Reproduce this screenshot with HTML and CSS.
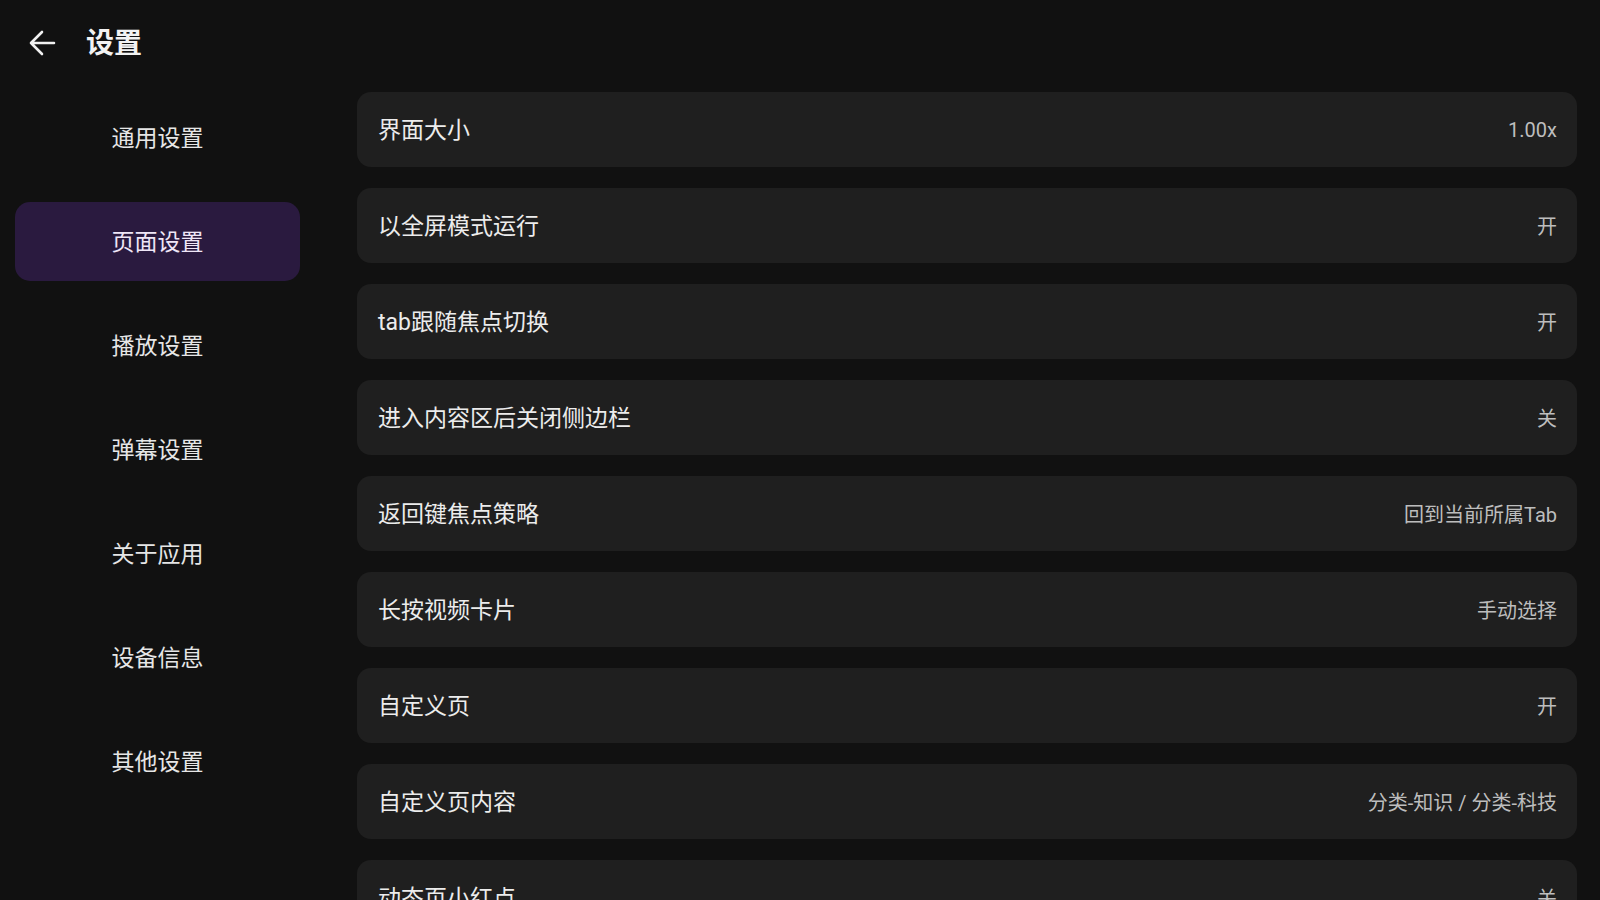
FILE: index.html
```html
<!DOCTYPE html>
<html lang="zh">
<head>
<meta charset="utf-8">
<title>设置</title>
<link rel="stylesheet" href="styles.css">
</head>
<body>
<header class="header">
  <svg class="back" viewBox="0 0 28 28" width="28" height="28">
    <path d="M26 14H3M14 3L3 14L14 25" fill="none" stroke="#f0f0f0" stroke-width="2.6" stroke-linecap="round" stroke-linejoin="round"/>
  </svg>
  <h1 class="title">设置</h1>
</header>
<div class="main">
  <nav class="sidebar">
    <div class="nav-item">通用设置</div>
    <div class="nav-item active">页面设置</div>
    <div class="nav-item">播放设置</div>
    <div class="nav-item">弹幕设置</div>
    <div class="nav-item">关于应用</div>
    <div class="nav-item">设备信息</div>
    <div class="nav-item">其他设置</div>
  </nav>
  <section class="content">
    <div class="row"><span class="label">界面大小</span><span class="value">1.00x</span></div>
    <div class="row"><span class="label">以全屏模式运行</span><span class="value">开</span></div>
    <div class="row"><span class="label">tab跟随焦点切换</span><span class="value">开</span></div>
    <div class="row"><span class="label">进入内容区后关闭侧边栏</span><span class="value">关</span></div>
    <div class="row"><span class="label">返回键焦点策略</span><span class="value">回到当前所属Tab</span></div>
    <div class="row"><span class="label">长按视频卡片</span><span class="value">手动选择</span></div>
    <div class="row"><span class="label">自定义页</span><span class="value">开</span></div>
    <div class="row"><span class="label">自定义页内容</span><span class="value">分类-知识 / 分类-科技</span></div>
    <div class="row"><span class="label">动态页小红点</span><span class="value">关</span></div>
  </section>
</div>
</body>
</html>
```

FILE: styles.css
```css
* { box-sizing: border-box; }
html, body {
  margin: 0;
  padding: 0;
  width: 1600px;
  height: 900px;
  overflow: hidden;
  background: #111111;
  color: #ececec;
  font-family: Roboto, "Noto Sans CJK SC", sans-serif;
}
.header {
  height: 86px;
  display: flex;
  align-items: center;
  padding-left: 28px;
}
.back { display: block; }
.title {
  margin: 0 0 0 30px;
  font-size: 28px;
  font-weight: 700;
  color: #f2f2f2;
  line-height: 1;
  padding-top: 1px;
}
.main {
  display: flex;
  align-items: flex-start;
}
.sidebar {
  width: 285px;
  margin-left: 15px;
  padding-top: 12px;
  display: flex;
  flex-direction: column;
  gap: 25px;
}
.nav-item {
  height: 79px;
  border-radius: 15px;
  display: flex;
  align-items: center;
  justify-content: center;
  font-size: 23px;
  color: #e6e6e6;
  padding-bottom: 4px;
}
.nav-item.active {
  background: #2a1a3f;
  color: #efe6f7;
}
.content {
  margin-left: 57px;
  width: 1220px;
  padding-top: 6px;
  display: flex;
  flex-direction: column;
  gap: 21px;
}
.row {
  height: 75px;
  flex-shrink: 0;
  background: #1f1f1f;
  border-radius: 14px;
  display: flex;
  align-items: center;
  justify-content: space-between;
  padding: 0 20px 3px 21px;
}
.label {
  font-size: 23px;
  color: #ececec;
}
.value {
  font-size: 20px;
  color: #bdbdbd;
  margin-top: 3px;
}
```
